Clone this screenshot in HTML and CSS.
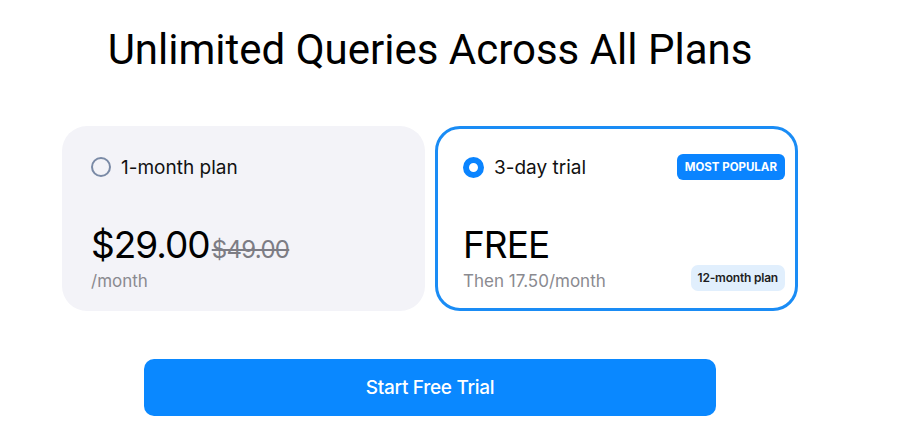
FILE: index.html
```html
<!DOCTYPE html>
<html lang="en">

<head>
  <meta charset="UTF-8">
  <meta name="viewport" content="width=device-width, initial-scale=1.0">
  <title>Plans</title>
  <link rel="stylesheet" href="styles.css">
</head>

<body>
  <div class="pricing">
    <h1 class="pricing__title">Unlimited Queries Across All Plans</h1>

    <div class="plans">
      <!-- месячный план -->
      <div class="plan">
        <div class="plan__head">
          <span class="radio"></span>
          <span class="plan__name">1-month plan</span>
        </div>
        <div class="plan__price">
          <span class="plan__amount">$29.00</span>
          <span class="plan__old">$49.00</span>
        </div>
        <div class="plan__note">/month</div>
      </div>

      <!-- пробный период -->
      <div class="plan plan_active">
        <div class="plan__head">
          <span class="radio radio_checked"></span>
          <span class="plan__name">3-day trial</span>
          <span class="badge">MOST POPULAR</span>
        </div>
        <div class="plan__price">
          <span class="plan__amount">FREE</span>
        </div>
        <div class="plan__bottom">
          <div class="plan__note">Then 17.50/month</div>
          <span class="tag">12-month plan</span>
        </div>
      </div>
    </div>

    <button class="btn">Start Free Trial</button>
  </div>
</body>

</html>
```

FILE: styles.css
```css
* {
  box-sizing: border-box
}

body {
  margin: 0;
  background: #fff;
  font-family: Inter, "Noto Sans", sans-serif;
  color: #111
}

.pricing {
  width: 736px;
  margin-left: 62px;
  padding-top: 24px;
  display: flex;
  flex-direction: column;
  align-items: center
}

.pricing__title {
  margin: 0;
  font-family: Roboto, sans-serif;
  font-weight: 400;
  font-size: 42px;
  line-height: 52px;
  color: #000
}

.plans {
  display: grid;
  grid-template-columns: 363px 363px;
  gap: 10px;
  width: 100%;
  margin-top: 50px
}

.plan {
  height: 185px;
  padding: 23px 26px 17px 26px;
  background: #f3f3f8;
  border: 3px solid transparent;
  border-radius: 25px;
  display: flex;
  flex-direction: column
}

.plan_active {
  background: #fff;
  border-color: #1a8cf5;
  padding-left: 25px;
  padding-right: 10px
}

.plan__head {
  display: flex;
  align-items: center;
  gap: 10px;
  height: 30px
}

.radio {
  width: 20px;
  height: 20px;
  border-radius: 50%;
  border: 2px solid #7a8aa6
}

.radio_checked {
  width: 21px;
  height: 21px;
  border: 6px solid #0a84ff;
  background: #fff
}

.plan__name {
  font-size: 19px;
  color: #111
}

.badge {
  margin-left: auto;
  padding: 0 8px;
  height: 26px;
  line-height: 26px;
  background: #0a84ff;
  color: #fff;
  font-size: 11.5px;
  font-weight: 700;
  border-radius: 6px
}

.plan__price {
  margin-top: auto;
  display: flex;
  align-items: baseline;
  gap: 2px
}

.plan__amount {
  font-size: 37px;
  line-height: 40px;
  letter-spacing: -1px;
  color: #000
}

.plan__old {
  font-size: 24px;
  letter-spacing: -0.7px;
  color: #7c7c84;
  text-decoration: line-through
}

.plan__note {
  margin-top: 6px;
  font-size: 17px;
  color: #8a8a90
}

.plan__bottom {
  display: flex;
  align-items: flex-end;
  justify-content: space-between
}

.tag {
  height: 26px;
  line-height: 26px;
  padding: 0 7px;
  background: #e1effd;
  color: #1d1d22;
  font-size: 12px;
  font-weight: 600;
  letter-spacing: -0.2px;
  border-radius: 7px;
  margin-bottom: 0
}

.btn {
  margin-top: 48px;
  width: 572px;
  height: 57px;
  border: none;
  border-radius: 10px;
  background: #0a88ff;
  color: #fff;
  font-family: Inter, sans-serif;
  font-size: 19px;
  font-weight: 500;
  letter-spacing: -0.3px;
  cursor: pointer
}
```
